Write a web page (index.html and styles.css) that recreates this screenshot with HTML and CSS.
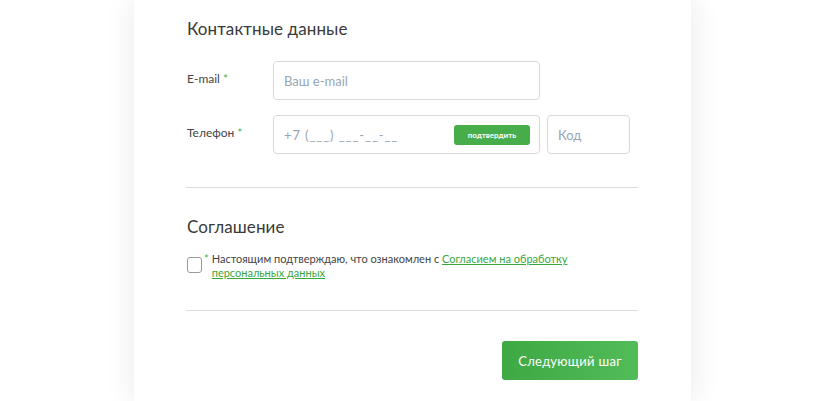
FILE: index.html
```html
<!DOCTYPE html>
<html lang="ru">
<head>
<meta charset="utf-8">
<link rel="stylesheet" href="styles.css">
</head>
<body>
<div class="card">
  <section class="section">
    <h2 class="title">Контактные данные</h2>
    <div class="row">
      <label class="label">E-mail<span class="req">*</span></label>
      <div class="field"><span class="ph">Ваш e-mail</span></div>
    </div>
    <div class="row">
      <label class="label">Телефон<span class="req">*</span></label>
      <div class="field phone"><span class="ph mask">+7 (___) ___-__-__</span><button class="confirm">подтвердить</button></div>
      <div class="field code"><span class="ph">Код</span></div>
    </div>
  </section>
  <hr class="divider first">
  <section class="section agree">
    <h2 class="title">Соглашение</h2>
    <div class="check-row">
      <span class="box"></span>
      <span class="req star">*</span>
      <p class="agree-text">Настоящим подтверждаю, что ознакомлен с <a class="link" href="#">Согласием на обработку персональных данных</a></p>
    </div>
  </section>
  <hr class="divider second">
  <div class="actions">
    <button class="next">Следующий шаг</button>
  </div>
</div>
</body>
</html>
```
FILE: styles.css
```css
* { box-sizing: border-box; }
html, body { margin: 0; padding: 0; background: #fff; }
body {
  font-family: "Lato", "Open Sans", sans-serif;
  color: #333;
  height: 401px;
  overflow: hidden;
}
.card {
  width: 557px;
  margin: 0 auto;
  background: #fff;
  box-shadow: 0 0 30px rgba(0,0,0,0.09);
  padding: 15px 53px 21px 52px;
  min-height: 401px;
}
.title {
  font-weight: 400;
  font-size: 17px;
  line-height: 28px;
  margin: 0 0 18px 1px;
  color: #3a3a3a;
  letter-spacing: 0.1px;
}
.row {
  display: flex;
  align-items: center;
  margin-bottom: 15px;
}
.label {
  width: 87px;
  font-size: 12px;
  color: #444;
  padding-left: 1px;
  margin-top: -4px;
}
.req { color: #4caf50; margin-left: 3px; }
.field {
  width: 267px;
  height: 39px;
  border: 1px solid #d9d9d9;
  border-radius: 4px;
  display: flex;
  align-items: center;
  padding: 0 10px;
  font-size: 13px;
}
.ph { color: #98a6b5; }
.mask { letter-spacing: 0.9px; }
.phone { justify-content: space-between; padding-right: 9px; }
.confirm {
  background: #47ad4a;
  color: #fff;
  border: 0;
  border-radius: 3px;
  font-family: "Lato", sans-serif;
  font-weight: 700;
  font-size: 8px;
  width: 76px;
  height: 20px;
  padding: 0;
}
.code { width: 83px; margin-left: 7px; }
.divider {
  border: 0;
  border-top: 1px solid #dcdcdc;
  margin: 0;
}
.divider.first { margin-top: 33px; }
.agree { padding-top: 25px; }
.agree .title { margin-bottom: 11px; }
.check-row {
  display: flex;
  align-items: flex-start;
  font-size: 11px;
}
.box {
  width: 15px;
  height: 16px;
  border: 1px solid #9a9a9a;
  border-radius: 3px;
  margin: 5px 2px 0 1px;
  flex: none;
}
.star { margin: 0 3px 0 0; }
.agree-text {
  margin: 0;
  line-height: 14px;
  width: 360px;
  color: #444;
}
.link { color: #3aa63e; }
.divider.second { margin-top: 30px; }
.actions {
  display: flex;
  justify-content: flex-end;
  padding-top: 30px;
}
.next {
  width: 136px;
  height: 39px;
  border: 0;
  border-radius: 3px;
  background: linear-gradient(90deg, #3ea843, #52bc59);
  color: #fff;
  font-family: "Lato", sans-serif;
  font-size: 13px;
  letter-spacing: 0.3px;
}
```
